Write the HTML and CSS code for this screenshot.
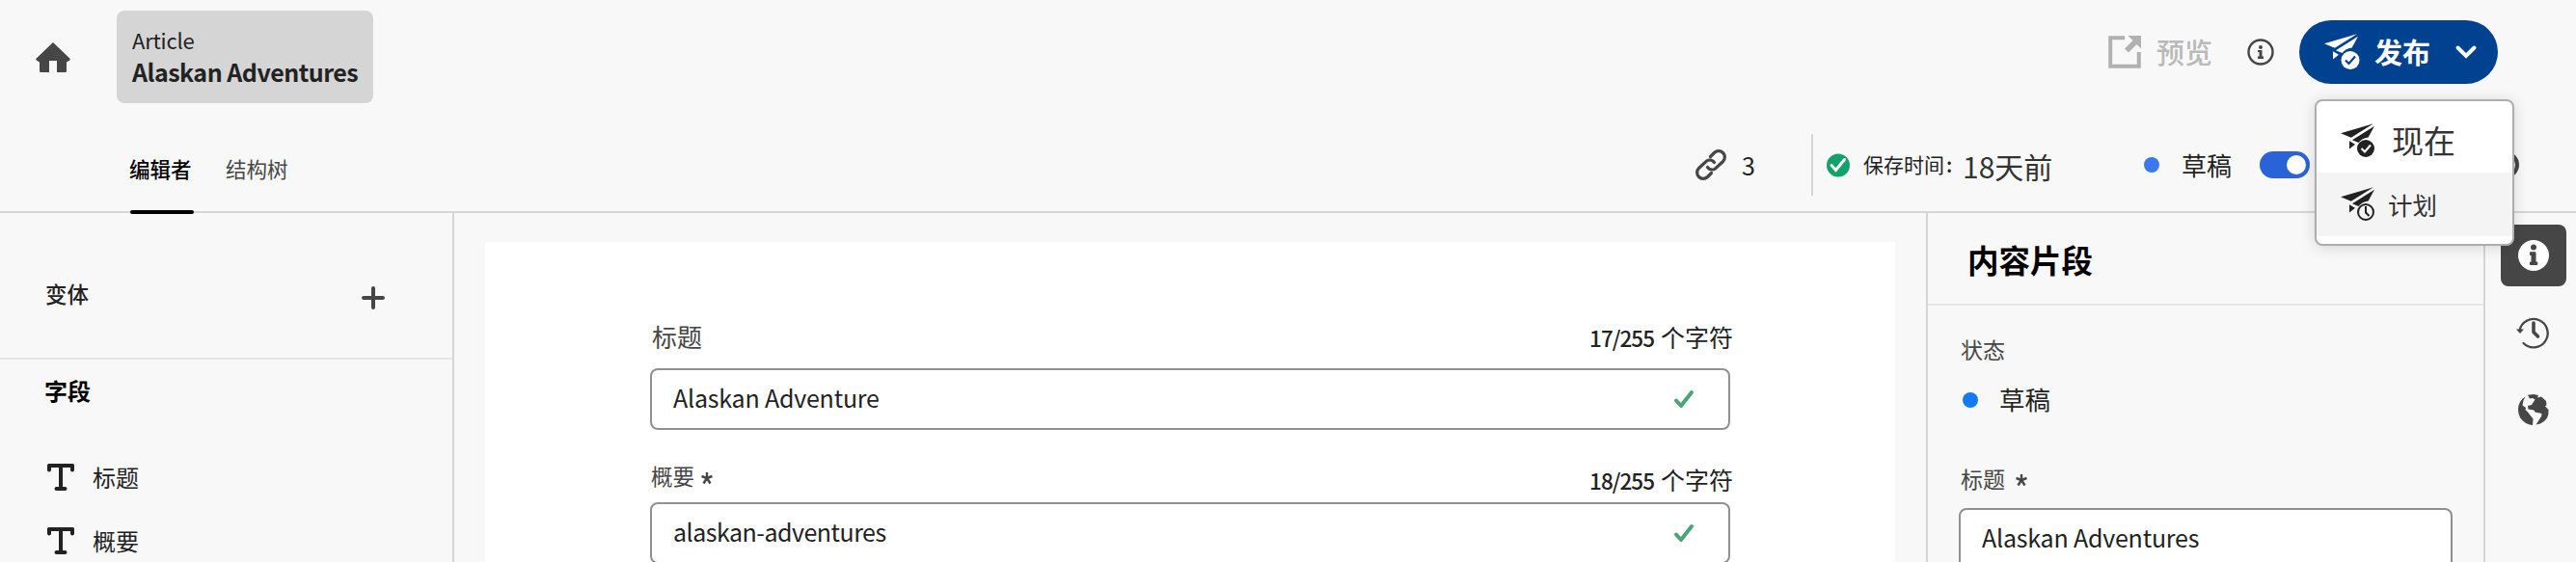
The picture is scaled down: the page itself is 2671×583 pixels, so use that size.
FILE: index.html
```
<!DOCTYPE html>
<html lang="zh-CN">
<head>
<meta charset="utf-8">
<title>Alaskan Adventures</title>
<link rel="stylesheet" href="styles.css">
</head>
<body>
<svg width="0" height="0" class="defs">
  <defs>
    <g id="plane">
      <path d="M0 10.300 34 .3 10.800 14.800Z"/>
      <path d="M35 2.800 28.600 14.600Q22 15.500 18.500 20L12 17.200Z"/>
      <path d="M9 18.200 15 21.700 9 26.500Z"/>
    </g>
    <g id="text-type"><path d="M1.500 0h25A1.500 1.500 0 0 1 28 1.500v5a2 2 0 0 1-4 0V4H16v20h2.500a2 2 0 0 1 0 4h-9a2 2 0 0 1 0-4H12V4H4v2.500a2 2 0 0 1-4 0v-5A1.500 1.500 0 0 1 1.500 0Z"/></g>
    <g id="valid"><path d="M2 10.500 7 16 18 2" fill="none" stroke="#4ba471" stroke-width="4" stroke-linecap="round" stroke-linejoin="round"/></g>
    <g id="asterisk"><path d="M7 7V1M7 7 1.500 5M7 7 12.500 5M7 7 3.500 12.500M7 7 10.500 12.500" fill="none" stroke="#464646" stroke-width="2.400"/></g>
  </defs>
</svg>
<header class="header">
  <div class="topbar">
    <svg class="home" width="36" height="31" viewBox="0 0 36 31"><path d="M18 0 35.500 16.800Q36.300 17.800 35 18.800L32 20.500V29.500Q32 31 30.500 31H22V19H14V31H5.500Q4 31 4 29.500V20.500L1 18.800Q-.3 17.800.5 16.800Z" fill="#464646"/></svg>
    <div class="chip">
      <div class="chip-type"><span>Article</span></div>
      <div class="chip-name"><span>Alaskan Adventures</span></div>
    </div>
    <div class="actions">
      <svg width="34" height="34" viewBox="0 0 34 34"><path d="M17 2.200H2.200V31.800H31.800V17" fill="none" stroke="#b1b1b1" stroke-width="4"/><path d="M20.500 0H34V13.500L29.500 9 21 17.500 17 13.500 25.500 5Z" fill="#b1b1b1"/></svg>
      <span class="preview">预览</span>
      <svg class="info" width="28" height="28" viewBox="0 0 28 28"><circle cx="14" cy="14" r="12.500" fill="none" stroke="#464646" stroke-width="2.400"/><circle cx="14" cy="9" r="2" fill="#464646"/><path d="M11 12h4.500v6.500H17V21H11v-2.500h1.500V14H11Z" fill="#464646"/></svg>
      <button class="publish">
        <svg width="37" height="38" viewBox="0 0 37 38" fill="#fff"><use href="#plane"/><circle cx="27" cy="27.500" r="9.500"/><path d="M22 27.500 25.500 31 32 23.500" fill="none" stroke="#00428f" stroke-width="2.200"/></svg>
        <span class="publish-label">发布</span>
        <svg class="chevron" width="22" height="15" viewBox="0 0 22 15"><path d="M2.500 2.500 11 11 19.500 2.500" fill="none" stroke="#fff" stroke-width="4" stroke-linecap="round"/></svg>
      </button>
    </div>
  </div>
  <div class="subbar">
    <nav class="tabs"><a class="tab active">编辑者</a><a class="tab">结构树</a></nav>
    <div class="status">
      <svg width="32" height="32" viewBox="0 0 32 32" fill="none" stroke="#464646" stroke-width="3.200" stroke-linecap="round"><path d="M15.500 7.500 19.500 3.500A6 6 0 0 1 28.500 12.500L20.500 20A6 6 0 0 1 12.500 18.500"/><path d="M16.500 24.500 12.500 28.500A6 6 0 0 1 3.500 19.500L11.500 12A6 6 0 0 1 19.500 13.500"/></svg>
      <span class="link-count">3</span>
      <i class="divider"></i>
      <svg width="24" height="25" viewBox="0 0 24 25"><circle cx="12" cy="12.500" r="12" fill="#12a36b"/><path d="M5 12.500 9.500 17.500 18.500 6.500" fill="none" stroke="#fff" stroke-width="3" stroke-linecap="round"/></svg>
      <span class="saved">保存时间<b>:</b></span>
      <span class="ago">18天前</span>
      <i class="dot dot-head"></i>
      <span class="draft">草稿</span>
      <i class="toggle"></i>
      <i class="ring"></i>
    </div>
  </div>
</header>
<main class="body">
  <aside class="sidebar">
    <div class="variations"><span>变体</span><svg width="24" height="24" viewBox="0 0 24 24"><path d="M12 2V22M2 12H22" stroke="#464646" stroke-width="4" stroke-linecap="round"/></svg></div>
    <div class="fields-title">字段</div>
    <div class="field-link"><svg width="28" height="28" fill="#222"><use href="#text-type"/></svg><span>标题</span></div>
    <div class="field-link"><svg width="28" height="28" fill="#222"><use href="#text-type"/></svg><span>概要</span></div>
  </aside>
  <section class="canvas">
    <div class="sheet">
      <div class="label-row row-one"><span class="label">标题</span><span class="count"><b>17/255</b>个字符</span></div>
      <div class="input"><span>Alaskan Adventure</span><svg width="20" height="18"><use href="#valid"/></svg></div>
      <div class="label-row row-two"><span class="label small">概要</span><svg class="star" width="14" height="14"><use href="#asterisk"/></svg><span class="count"><b>18/255</b>个字符</span></div>
      <div class="input"><span class="slug">alaskan-adventures</span><svg width="20" height="18"><use href="#valid"/></svg></div>
    </div>
  </section>
  <aside class="panel">
    <h2 class="panel-title">内容片段</h2>
    <div class="panel-body">
      <div class="plabel">状态</div>
      <div class="pstatus"><i class="dot"></i><span>草稿</span></div>
      <div class="plabel ptitle">标题<svg class="star" width="14" height="14"><use href="#asterisk"/></svg></div>
      <div class="input pinput"><span>Alaskan Adventures</span></div>
    </div>
  </aside>
  <nav class="rail">
    <div class="rail-btn selected"><svg width="32" height="32" viewBox="0 0 32 32"><circle cx="16" cy="16" r="16" fill="#fff"/><circle cx="16" cy="7.500" r="3" fill="#464646"/><path d="M12.500 12.800H18V23H19.800V25.500H12.500V23H14V15.500H12.500Z" fill="#464646" stroke="#464646" stroke-linejoin="round"/></svg></div>
    <div class="rail-btn history"><svg width="34" height="32" viewBox="0 0 34 32" fill="none" stroke="#464646"><path d="M3.500 14A14.700 14.700 0 1 1 7.500 27" stroke-width="2.300" stroke-linecap="round"/><path d="M0 12.500H8L4 17Z" fill="#464646" stroke="none"/><path d="M18 6V15.500L22.500 20" stroke-width="3.600" stroke-linecap="round" stroke-linejoin="round"/></svg></div>
    <div class="rail-btn"><svg width="32" height="32" viewBox="0 0 32 32" fill="#464646"><path d="M7.500 2.500Q0 7 0 16T8 30Q12 32 15 32L15.500 25.500 10 18.500 7.500 16 8 14 4.500 11.500 5.500 6.500ZM10 .8 16 0 21 1 20 3.500 24 2.500 29 7 29.500 11 28 12.500 31.500 16Q32.500 26 23 30.500L18.500 31.500 24 23 24.500 20 17.500 18.500 16.500 16.500 10.500 15.500 10 12 14 11 17.500 5.500 15 4 12 4.500Z"/></svg></div>
  </nav>
</main>
<div class="menu">
  <div class="menu-item"><svg width="36" height="36" viewBox="0 0 36 36" fill="#222"><use href="#plane"/><circle cx="26" cy="26" r="9"/><path d="M21.500 26 25 29.500 31 22.500" fill="none" stroke="#fff" stroke-width="2.200"/></svg><span class="now">现在</span></div>
  <div class="menu-item hover"><svg width="36" height="36" viewBox="0 0 36 36" fill="#222"><use href="#plane"/><circle cx="26" cy="26" r="8" fill="#f4f4f4" stroke="#222" stroke-width="2"/><path d="M26 20V26.500L29.500 30" fill="none" stroke="#222" stroke-width="2"/></svg><span class="later">计划</span></div>
</div>
</body>
</html>
```
FILE: styles.css
```
* { box-sizing: border-box; }
body {
  margin: 0;
  width: 2671px;
  height: 583px;
  overflow: hidden;
  position: relative;
  background: #f8f8f8;
  color: #222;
  font-family: "Noto Sans CJK SC", sans-serif;
}
svg { display: block; flex: none; overflow: visible; }
span { white-space: nowrap; }
.defs { position: absolute; }

.header { height: 221px; border-bottom: 2px solid #d5d5d5; display: flex; flex-direction: column; }
.topbar { height: 118px; display: flex; align-items: flex-start; padding: 11px 0 0 37px; }
.home { margin-top: 33px; }
.chip { width: 266px; height: 96px; margin-left: 48px; padding: 13px 16px; border-radius: 8px; background: #d5d5d5; }
.chip-type { font-size: 22px; line-height: 34px; letter-spacing: -.2px; }
.chip-name { font-size: 25px; line-height: 33px; font-weight: 700; letter-spacing: -.5px; }
.actions { margin: 10px 81px 0 auto; height: 66px; display: flex; align-items: center; }
.preview { margin-left: 16px; width: 60px; padding-bottom: 3px; font-size: 29px; line-height: 40px; font-weight: 500; color: #b9b9b9; }
.info { margin-left: 34px; }
.publish { margin-left: 26px; width: 206px; height: 66px; padding: 0 0 0 26px; border: 0; border-radius: 33px; background: #00428f; color: #fff; display: flex; align-items: center; font-family: inherit; }
.publish-label { margin-left: 15px; width: 60px; padding-bottom: 3px; font-size: 29px; line-height: 40px; font-weight: 700; text-align: left; }
.chevron { margin-left: 24px; }

.subbar { height: 101px; display: flex; }
.tabs { display: flex; gap: 34px; padding-left: 135px; margin-right: auto; }
.tab { width: 66px; height: 104px; padding-top: 41px; font-size: 21.500px; line-height: 32px; color: #464646; position: relative; text-indent: -1px; }
.tab.active { color: #000; font-weight: 500; }
.tab.active::after { content: ""; position: absolute; left: 0; right: 0; bottom: 0; height: 4px; border-radius: 2px; background: #000; }
.status { width: 913px; height: 64px; margin-top: 21px; display: flex; align-items: center; }
.link-count { width: 14px; margin-left: 16px; font-size: 25px; line-height: 30px; padding-bottom: 1px; }
.divider { width: 2px; height: 64px; margin: 0 14px 0 58px; background: #d5d5d5; }
.saved { width: 93px; margin-left: 14px; padding-bottom: 2px; font-size: 21px; line-height: 30px; }
.saved b { margin-left: 2px; font-weight: 500; }
.ago { width: 92px; margin-left: 10px; padding-top: 2px; font-size: 30px; line-height: 40px; color: #333; }
.dot { width: 16px; height: 16px; border-radius: 50%; background: #147af3; flex: none; }
.dot-head { margin-left: 96px; background: #3b78ee; }
.draft { width: 54px; margin-left: 23px; font-size: 26px; line-height: 36px; }
.toggle { width: 52px; height: 28px; margin-left: 27px; padding: 4px; border-radius: 14px; background: #2a63d8; display: flex; justify-content: flex-end; flex: none; }
.toggle::after { content: ""; width: 20px; height: 20px; border-radius: 50%; background: #fff; }
.ring { width: 28px; height: 28px; margin-left: 189px; border: 4px solid #464646; border-radius: 50%; flex: none; }

.body { height: 362px; display: flex; }
.sidebar { width: 471px; border-right: 2px solid #d5d5d5; }
.variations { height: 152px; padding: 0 70px 0 47px; border-bottom: 2px solid #e6e6e6; display: flex; justify-content: space-between; font-size: 22.500px; line-height: 32px; }
.variations span { margin-top: 67px; font-weight: 500; }
.variations svg { margin-top: 76px; }
.fields-title { padding: 14px 0 0 46px; height: 89px; font-size: 24px; line-height: 36px; font-weight: 700; color: #000; }
.field-link { height: 66px; padding: 19px 0 0 49px; display: flex; gap: 19px; font-size: 24px; line-height: 34px; }
.field-link span { margin-top: -3px; }

.canvas { width: 1526px; padding: 30px 0 0 32px; }
.sheet { width: 1462px; height: 332px; padding: 74px 171px 0 171px; background: #fff; }
.label-row { display: flex; align-items: flex-start; color: #464646; }
.row-one { height: 57px; }
.row-two { height: 75px; }
.label { margin: 5px 0 0 2px; font-size: 26px; line-height: 38px; }
.label.small { margin-top: 28px; margin-left: 1px; font-size: 22.500px; line-height: 38px; }
.row-two .star { margin: 43px 0 0 6px; }
.count { margin: 5px -3px 0 auto; font-size: 25px; line-height: 38px; color: #222; }
.count b { margin-right: 7px; font-size: 22.500px; font-weight: 500; letter-spacing: -1px; }
.row-two .count { margin-top: 32px; }
.input { height: 64px; padding: 0 36px 0 22px; border: 2px solid #909090; border-radius: 8px; background: #fff; display: flex; align-items: center; justify-content: space-between; font-size: 25px; line-height: 38px; letter-spacing: -.2px; }
.input span { padding-bottom: 4px; }
.slug { letter-spacing: -.5px; }

.panel { width: 580px; border-left: 2px solid #d5d5d5; border-right: 2px solid #d5d5d5; }
.panel-title { margin: 0; height: 96px; padding: 24px 0 0 41px; border-bottom: 2px solid #e6e6e6; font-size: 32.500px; line-height: 48px; font-weight: 700; color: #000; }
.panel-body { padding: 27px 32px 0 32px; }
.plabel { padding-left: 2px; font-size: 23px; line-height: 36px; color: #464646; display: flex; }
.pstatus { height: 36px; margin-top: 17px; padding-left: 4px; display: flex; gap: 22px; align-items: center; font-size: 26.500px; line-height: 36px; }
.pstatus span { padding-bottom: 2px; }
.ptitle { margin-top: 45px; }
.ptitle .star { margin: 13px 0 0 10px; }
.pinput { margin-top: 13px; }

.rail { padding: 12px 0 0 16px; display: flex; flex-direction: column; gap: 16px; }
.rail-btn { width: 68px; height: 64px; border-radius: 8px; display: flex; align-items: center; justify-content: center; }
.rail-btn.selected { background: #464646; }
.rail-btn.history { padding-right: 2px; }

.menu { position: absolute; left: 2400px; top: 103px; width: 207px; height: 152px; padding-top: 8px; border: 2px solid #adadad; border-radius: 8px; background: #fff; box-shadow: 0 2px 16px rgba(0, 0, 0, .14); }
.menu-item { height: 66px; padding-left: 25px; display: flex; align-items: center; }
.menu-item.hover { background: #f4f4f4; }
.now { margin-left: 17px; padding-bottom: 2px; font-size: 33px; line-height: 48px; color: #333; }
.later { margin-left: 13px; padding-bottom: 1px; font-size: 25.500px; line-height: 38px; color: #333; }
```
